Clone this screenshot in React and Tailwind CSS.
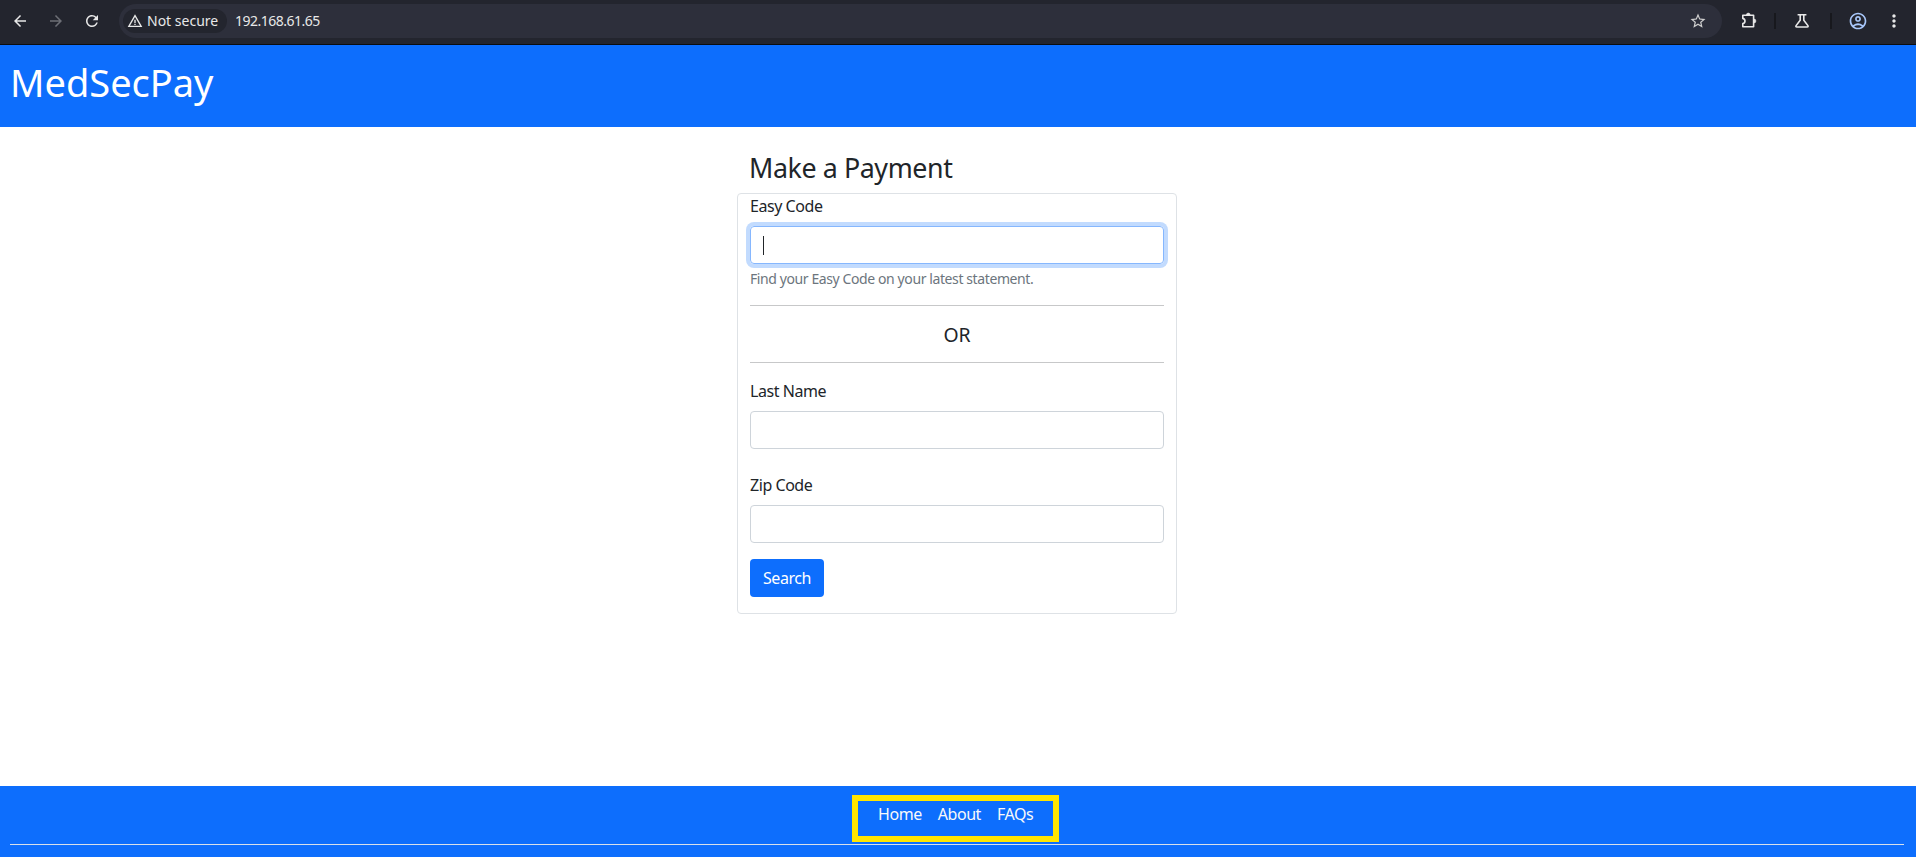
import React from "react";
import {
  MdArrowBack,
  MdArrowForward,
  MdRefresh,
  MdWarningAmber,
  MdStarBorder,
  MdOutlineAccountCircle,
  MdMoreVert,
} from "react-icons/md";

function PuzzleIcon({ className }) {
  return (
    <svg viewBox="0 0 18 18" fill="none" className={className}>
      <path
        d="M2.8 3.3H13.6V14.7H2.8V11.6C4.4 11.2 5 10.2 5 9S4.4 6.8 2.8 6.4Z"
        stroke="currentColor"
        strokeWidth="1.6"
        strokeLinejoin="round"
      />
      <path d="M6.4 3a1.9 1.9 0 0 1 3.8 0ZM14 7.1a1.9 1.9 0 0 1 0 3.8Z" fill="currentColor" stroke="currentColor" strokeWidth="0.6" />
    </svg>
  );
}

function FlaskIcon({ className }) {
  return (
    <svg viewBox="0 0 18 18" fill="none" className={className}>
      <path
        d="M4.6 2.8H13.4M7.2 3V8.2L3.1 13.6Q2.4 15 3.8 15H14.2Q15.6 15 14.9 13.6L10.8 8.2V3"
        stroke="currentColor"
        strokeWidth="1.6"
      />
    </svg>
  );
}

function BrowserBar() {
  return (
    <div className="flex h-[45px] shrink-0 items-start border-b border-[#0c0d0f] bg-[#23252e] pt-1 text-[#e8e8e8]">
      <div className="flex h-[34px] w-[119px] shrink-0 items-center pl-[11px]">
        <MdArrowBack className="size-[18px]" />
        <MdArrowForward className="ml-[18px] size-[18px] text-[#6d6f76]" />
        <MdRefresh className="ml-[18px] size-[18px]" />
      </div>
      <div className="flex h-[34px] w-[1603px] shrink-0 items-center rounded-full bg-[#2d2f3b] pl-[4px]">
        <div className="flex h-6 w-[104px] items-center rounded-full bg-[#23252e] pl-1">
          <MdWarningAmber className="size-4" />
          <span className="ml-1 text-[14px] leading-6 tracking-normal whitespace-nowrap">Not secure</span>
        </div>
        <span className="ml-2 text-[14px] leading-6 tracking-[-0.5px]">192.168.61.65</span>
        <MdStarBorder className="mr-[15px] ml-auto size-[18px] text-[#d0d0d0]" />
      </div>
      <div className="flex h-[34px] items-center">
        <PuzzleIcon className="ml-[18px] size-[18px]" />
        <div className="ml-4 h-4 w-[2px] bg-[#17181d]" />
        <FlaskIcon className="ml-[17px] size-[18px]" />
        <div className="ml-[19px] h-4 w-[2px] bg-[#17181d]" />
        <MdOutlineAccountCircle className="ml-4 size-5 text-[#a8c7fa]" />
        <MdMoreVert className="ml-4 size-5" />
      </div>
    </div>
  );
}

function Field({ label, className }) {
  return (
    <div className={className}>
      <label className="mb-2 block leading-6">{label}</label>
      <div className="h-[38px] rounded border border-[#ced4da]" />
    </div>
  );
}

export default function App() {
  return (
    <div className="flex h-[857px] w-[1916px] flex-col overflow-hidden bg-white font-['Noto_Sans',sans-serif] text-[16px] tracking-[-0.45px] text-[#212529]">
      <BrowserBar />
      <header className="h-[82px] shrink-0 bg-[#0d6efd] px-[10px] pt-[13px]">
        <h1 className="text-[38px] leading-[48px] tracking-normal text-white">MedSecPay</h1>
      </header>
      <main className="flex flex-1 flex-col pl-[737px]">
        <h2 className="mt-6 ml-3 text-[26.8px] leading-[34px] tracking-[-0.4px]">Make a Payment</h2>
        <form className="mt-2 h-[421px] w-[440px] rounded border border-[#dee2e6] px-3">
          <label className="mb-2 block leading-6">Easy Code</label>
          <div className="flex h-[38px] items-center rounded border border-[#86b7fe] pl-3 shadow-[0_0_0_4px_#c2dbfe]">
            <div className="h-[19px] w-px bg-[#212529]" />
          </div>
          <p className="mt-1 text-[14px] leading-[21px] tracking-[-0.4px] text-[#6c757d]">Find your Easy Code on your latest statement.</p>
          <hr className="mt-4 border-[#c7c8c9]" />
          <p className="mt-[17px] text-center text-[19.4px] leading-6 tracking-normal">OR</p>
          <hr className="mt-[15px] border-[#c7c8c9]" />
          <Field label="Last Name" className="mt-4" />
          <Field label="Zip Code" className="mt-6" />
          <button type="button" className="mt-4 h-[38px] w-[74px] rounded bg-[#0d6efd] text-white">Search</button>
        </form>
      </main>
      <footer className="h-[71px] shrink-0 bg-[#0d6efd] pt-[9px] pr-3 pl-[10px]">
        <nav className="ml-[842px] flex h-[47px] w-[207px] gap-4 border-6 border-[#ffe500] pt-px pl-5 leading-6 text-[#f8f9fa]">
          <a>Home</a>
          <a>About</a>
          <a>FAQs</a>
        </nav>
        <hr className="mt-[2px] border-[#d8e0ea]" />
      </footer>
    </div>
  );
}
